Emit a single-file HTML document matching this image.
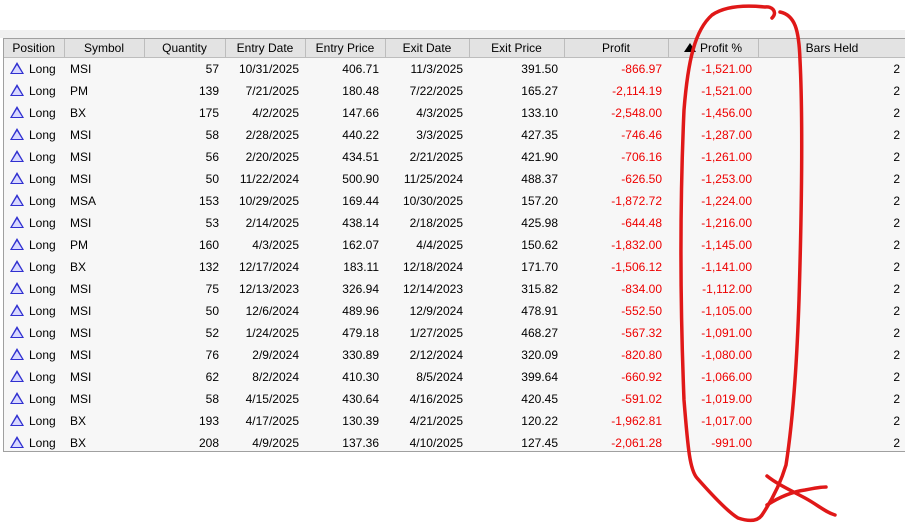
<!DOCTYPE html>
<html><head><style>
body{margin:0;width:905px;height:525px;background:#fff;font-family:"Liberation Sans",sans-serif;font-size:12px;position:relative;overflow:hidden}
.band{position:absolute;left:0;top:30px;width:905px;height:8px;background:#f0f0f0}
.tbl{position:absolute;left:3px;top:38px;width:902px;height:412px;background:#f7f7f7;border-left:1px solid #a0a0a0;border-top:1px solid #a0a0a0;border-bottom:1px solid #a0a0a0}
table{border-collapse:collapse;table-layout:fixed;width:902px}
th{height:18px;background:#e3e3e3;font-weight:normal;color:#000;border-right:1px solid #bdbdbd;border-bottom:1px solid #bdbdbd;padding:0;text-align:center}
td{height:22px;padding:0 6px;white-space:nowrap;color:#000}
td.r{text-align:right}
td.red{color:#e00;text-align:right}
.tri{display:inline-block;width:0;height:0;border-left:7px solid transparent;border-right:7px solid transparent;border-bottom:12px solid #3030d0;position:relative;vertical-align:-1px;margin-right:5px}
.tri:after{content:"";position:absolute;left:-5px;top:3px;border-left:5px solid transparent;border-right:5px solid transparent;border-bottom:8px solid #d8d8ff}
.up{display:inline-block;width:0;height:0;border-left:6px solid transparent;border-right:6px solid transparent;border-bottom:9px solid #000;margin-right:4px;vertical-align:0}
svg{position:absolute;left:0;top:0}
</style></head><body>
<div class="band"></div>
<div class="tbl"><table>
<colgroup><col style="width:60px"><col style="width:80px"><col style="width:81px"><col style="width:80px"><col style="width:80px"><col style="width:84px"><col style="width:95px"><col style="width:104px"><col style="width:90px"><col style="width:148px"></colgroup>
<tr><th>Position</th><th>Symbol</th><th>Quantity</th><th>Entry Date</th><th>Entry Price</th><th>Exit Date</th><th>Exit Price</th><th>Profit</th><th><span class="up"></span>Profit %</th><th>Bars Held</th></tr>
<tr><td><span class="tri"></span>Long</td><td>MSI</td><td class="r">57</td><td class="r">10/31/2025</td><td class="r">406.71</td><td class="r">11/3/2025</td><td class="r">391.50</td><td class="red">-866.97</td><td class="red">-1,521.00</td><td class="r">2</td></tr>
<tr><td><span class="tri"></span>Long</td><td>PM</td><td class="r">139</td><td class="r">7/21/2025</td><td class="r">180.48</td><td class="r">7/22/2025</td><td class="r">165.27</td><td class="red">-2,114.19</td><td class="red">-1,521.00</td><td class="r">2</td></tr>
<tr><td><span class="tri"></span>Long</td><td>BX</td><td class="r">175</td><td class="r">4/2/2025</td><td class="r">147.66</td><td class="r">4/3/2025</td><td class="r">133.10</td><td class="red">-2,548.00</td><td class="red">-1,456.00</td><td class="r">2</td></tr>
<tr><td><span class="tri"></span>Long</td><td>MSI</td><td class="r">58</td><td class="r">2/28/2025</td><td class="r">440.22</td><td class="r">3/3/2025</td><td class="r">427.35</td><td class="red">-746.46</td><td class="red">-1,287.00</td><td class="r">2</td></tr>
<tr><td><span class="tri"></span>Long</td><td>MSI</td><td class="r">56</td><td class="r">2/20/2025</td><td class="r">434.51</td><td class="r">2/21/2025</td><td class="r">421.90</td><td class="red">-706.16</td><td class="red">-1,261.00</td><td class="r">2</td></tr>
<tr><td><span class="tri"></span>Long</td><td>MSI</td><td class="r">50</td><td class="r">11/22/2024</td><td class="r">500.90</td><td class="r">11/25/2024</td><td class="r">488.37</td><td class="red">-626.50</td><td class="red">-1,253.00</td><td class="r">2</td></tr>
<tr><td><span class="tri"></span>Long</td><td>MSA</td><td class="r">153</td><td class="r">10/29/2025</td><td class="r">169.44</td><td class="r">10/30/2025</td><td class="r">157.20</td><td class="red">-1,872.72</td><td class="red">-1,224.00</td><td class="r">2</td></tr>
<tr><td><span class="tri"></span>Long</td><td>MSI</td><td class="r">53</td><td class="r">2/14/2025</td><td class="r">438.14</td><td class="r">2/18/2025</td><td class="r">425.98</td><td class="red">-644.48</td><td class="red">-1,216.00</td><td class="r">2</td></tr>
<tr><td><span class="tri"></span>Long</td><td>PM</td><td class="r">160</td><td class="r">4/3/2025</td><td class="r">162.07</td><td class="r">4/4/2025</td><td class="r">150.62</td><td class="red">-1,832.00</td><td class="red">-1,145.00</td><td class="r">2</td></tr>
<tr><td><span class="tri"></span>Long</td><td>BX</td><td class="r">132</td><td class="r">12/17/2024</td><td class="r">183.11</td><td class="r">12/18/2024</td><td class="r">171.70</td><td class="red">-1,506.12</td><td class="red">-1,141.00</td><td class="r">2</td></tr>
<tr><td><span class="tri"></span>Long</td><td>MSI</td><td class="r">75</td><td class="r">12/13/2023</td><td class="r">326.94</td><td class="r">12/14/2023</td><td class="r">315.82</td><td class="red">-834.00</td><td class="red">-1,112.00</td><td class="r">2</td></tr>
<tr><td><span class="tri"></span>Long</td><td>MSI</td><td class="r">50</td><td class="r">12/6/2024</td><td class="r">489.96</td><td class="r">12/9/2024</td><td class="r">478.91</td><td class="red">-552.50</td><td class="red">-1,105.00</td><td class="r">2</td></tr>
<tr><td><span class="tri"></span>Long</td><td>MSI</td><td class="r">52</td><td class="r">1/24/2025</td><td class="r">479.18</td><td class="r">1/27/2025</td><td class="r">468.27</td><td class="red">-567.32</td><td class="red">-1,091.00</td><td class="r">2</td></tr>
<tr><td><span class="tri"></span>Long</td><td>MSI</td><td class="r">76</td><td class="r">2/9/2024</td><td class="r">330.89</td><td class="r">2/12/2024</td><td class="r">320.09</td><td class="red">-820.80</td><td class="red">-1,080.00</td><td class="r">2</td></tr>
<tr><td><span class="tri"></span>Long</td><td>MSI</td><td class="r">62</td><td class="r">8/2/2024</td><td class="r">410.30</td><td class="r">8/5/2024</td><td class="r">399.64</td><td class="red">-660.92</td><td class="red">-1,066.00</td><td class="r">2</td></tr>
<tr><td><span class="tri"></span>Long</td><td>MSI</td><td class="r">58</td><td class="r">4/15/2025</td><td class="r">430.64</td><td class="r">4/16/2025</td><td class="r">420.45</td><td class="red">-591.02</td><td class="red">-1,019.00</td><td class="r">2</td></tr>
<tr><td><span class="tri"></span>Long</td><td>BX</td><td class="r">193</td><td class="r">4/17/2025</td><td class="r">130.39</td><td class="r">4/21/2025</td><td class="r">120.22</td><td class="red">-1,962.81</td><td class="red">-1,017.00</td><td class="r">2</td></tr>
<tr><td><span class="tri"></span>Long</td><td>BX</td><td class="r">208</td><td class="r">4/9/2025</td><td class="r">137.36</td><td class="r">4/10/2025</td><td class="r">127.45</td><td class="red">-2,061.28</td><td class="red">-991.00</td><td class="r">2</td></tr>
</table></div>
<svg width="905" height="525" viewBox="0 0 905 525" fill="none" stroke="#e01818" stroke-width="3.5" stroke-linecap="round" stroke-linejoin="round">
<path d="M772 18 C778 12 772 6 765 7 C745 5 725 6 712 15 C695 30 688 60 684 110 C680 200 680 300 684 400 C688 450 690 470 697 478 C712 495 728 512 738 518 C750 522 758 521 762 515 C772 500 780 485 786 465 C793 420 797 360 799 300 C802 200 803 120 800 60 C799 30 795 15 780 12"/>
<path d="M767 476 C777 484 790 490 805 498 C818 505 825 512 835 515"/>
<path d="M767 505 C778 498 790 492 805 490 C815 488 820 487 826 487"/>
</svg>
</body></html>
